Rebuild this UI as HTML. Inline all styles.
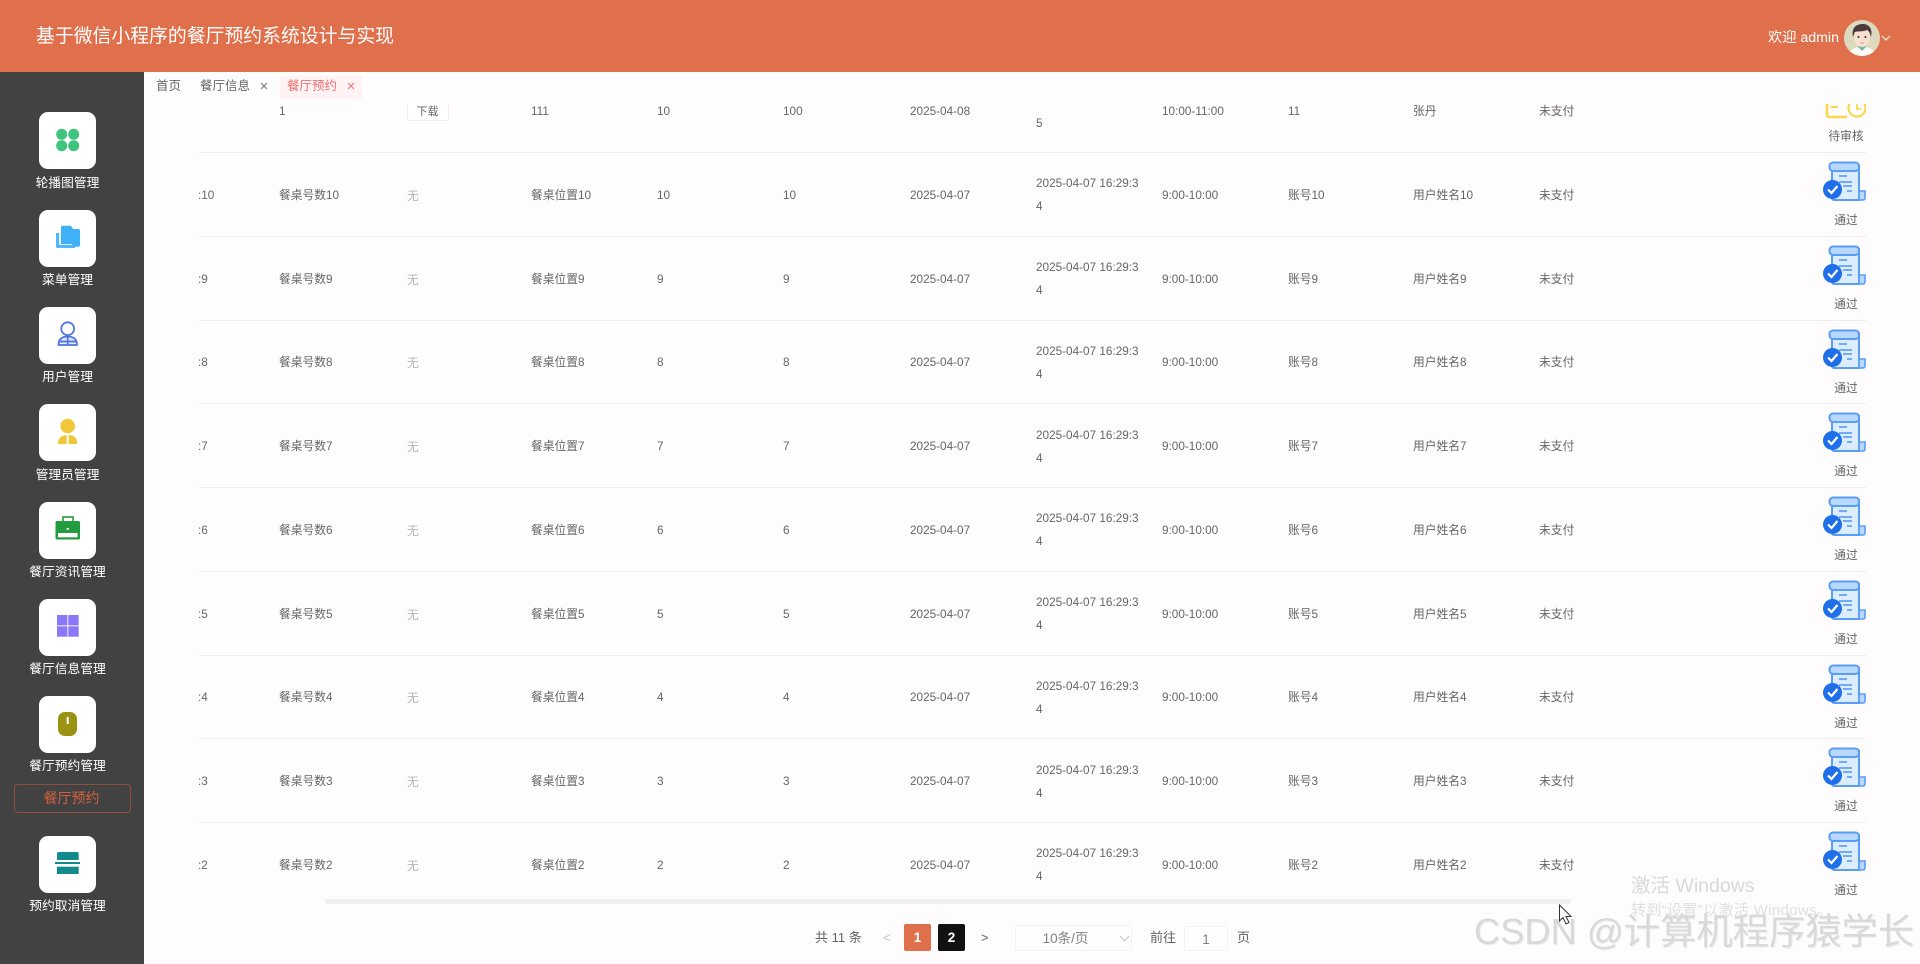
<!DOCTYPE html>
<html lang="zh-CN"><head><meta charset="utf-8"><title>餐厅预约系统</title>
<style>
*{box-sizing:border-box;margin:0;padding:0}
html,body{width:1920px;height:964px;overflow:hidden;background:#fefcfd;font-family:"Liberation Sans","Noto Sans CJK SC",sans-serif}
.a{position:absolute}
#hd{left:0;top:0;width:1920px;height:72px;background:#e0704b;z-index:5}
#title{left:36px;top:22px;font-size:18.85px;line-height:28px;color:#fff;white-space:nowrap}
#welcome{left:1768px;top:28px;font-size:14.2px;line-height:20px;color:#fff;white-space:nowrap}
#sb{left:0;top:72px;width:144px;height:892px;background:#424242;z-index:5}
.card{position:absolute;left:39px;width:57px;height:57px;background:#fff;border-radius:9px;z-index:6}
.lab{position:absolute;left:0;width:135px;text-align:center;color:#fff;font-size:12.75px;line-height:18px;white-space:nowrap;z-index:6}
.ic{position:absolute;left:0;top:0;z-index:7}
#sub{left:14px;top:784px;width:117px;height:29px;border:1px solid #8a4f3e;border-radius:4px;color:#d5603f;font-size:14px;line-height:27px;text-align:center;padding-right:2px;z-index:6}
#tabs{left:144px;top:72px;width:1776px;height:32px;background:#fefdfe;z-index:4}
.tab{position:absolute;top:5px;font-size:12.5px;line-height:18px;color:#666;white-space:nowrap}
#active{left:136px;top:4px;width:82px;height:23px;background:#fff3f3}
.r{position:absolute;left:199px;width:1667px;height:83.75px;border-bottom:1px solid #eeeef0;display:flex;color:#666;font-size:11.75px;overflow:hidden;z-index:1}
.r>span{display:flex;align-items:center;width:126px;line-height:23px;white-space:nowrap;flex:none;padding-top:2px}
.r>span:first-child{width:81px;margin-left:-1px}
.r>span:nth-child(7),.r>span:nth-child(8),.r>span:nth-child(9),.r>span:nth-child(10){padding-left:1px}
.r .no{color:#b5b5b5;padding-top:4px;padding-left:2px}
.r>span.topd{padding-top:4px}
.dl{position:absolute;left:207.5px;top:34px;width:42px;height:18px;border:1px solid #eeeeee;border-radius:2px;font-size:11px;line-height:16px;text-align:center;background:#fff;color:#666}
.st{position:absolute;left:1624px;top:8px;width:44px;height:40px}
.tx{position:absolute;left:1597px;width:100px;top:59px;text-align:center;line-height:18px;font-size:11.75px;color:#666}
#bar{left:325px;top:899px;width:1246px;height:5px;background:#f0eff1;z-index:3}
#pg{left:144px;top:904px;width:1776px;height:60px;background:#fefcfd;z-index:2}
.p{position:absolute;font-size:13px;line-height:18px;color:#606266;white-space:nowrap;z-index:3}
.b{position:absolute;top:924px;width:27px;height:27px;border-radius:2px;color:#fff;text-align:center;font-size:13.5px;font-weight:bold;line-height:27px;z-index:3}
.box{position:absolute;border:1px solid #f3f1f3;border-radius:3px;background:#fffdfe;color:#808080;text-align:center;z-index:3}
.wm{position:absolute;white-space:nowrap;z-index:8}
</style></head><body>
<svg width="0" height="0" style="position:absolute"><defs>
<symbol id="ok" viewBox="0 0 44 40">
<path d="M9 10V37a2 2 0 0 0 2 2H36V3" fill="#dcedff" stroke="#5a9df7" stroke-width="2"/>
<rect x="6.5" y="1.5" width="29.5" height="8.5" rx="3.5" fill="#b9d8ff" stroke="#5a9df7" stroke-width="2"/>
<path d="M16 15H24M16 21H29M20 25H29M24 30H29" stroke="#4f93f2" stroke-width="1.6" fill="none"/>
<path d="M36 30H42V37a2 2 0 0 1-2 2H36Z" fill="#b9d8ff" stroke="#5a9df7" stroke-width="1.6"/>
<circle cx="9.5" cy="28.5" r="9.5" fill="#1f6fe8"/>
<path d="M5 28.5L8.5 32L14.5 25" stroke="#fff" stroke-width="2.2" fill="none"/>
</symbol></defs></svg>

<div class="a" id="hd">
<div class="a" id="title">基于微信小程序的餐厅预约系统设计与实现</div>
<div class="a" id="welcome">欢迎 admin</div>
<svg class="a" style="left:1844px;top:20px" width="36" height="36" viewBox="0 0 36 36">
<clipPath id="cc"><circle cx="18" cy="18" r="18"/></clipPath>
<g clip-path="url(#cc)"><rect width="36" height="36" fill="#dcd9bf"/>
<path d="M5 36C6 28 12 27 18 27S30 28 31 36Z" fill="#fbfbf7"/>
<path d="M14 27L18 31L22 27L22 24H14Z" fill="#7fb5a5"/>
<ellipse cx="18" cy="17" rx="8" ry="10" fill="#f8dfd0"/>
<path d="M9 17C7 7 13 4 19 4C25 4 29 9 27 17C26 13 25 11 23 10C19 12 13 11 11 12C10 13 10 15 9 17Z" fill="#4b3a3e"/>
<circle cx="14.5" cy="17" r="1" fill="#3a2a2a"/><circle cx="21.5" cy="17" r="1" fill="#3a2a2a"/>
<path d="M16 23H20" stroke="#e29a90" stroke-width="1"/></g></svg>
<svg class="a" style="left:1881px;top:35px" width="10" height="7" viewBox="0 0 10 7"><path d="M1 1L5 5L9 1" stroke="#fff" stroke-width="1" fill="none"/></svg>
</div>

<div class="a" id="sb"></div>
<div class="card" style="top:112px"></div><div class="lab" style="top:174px">轮播图管理</div>
<div class="card" style="top:210px"></div><div class="lab" style="top:271px">菜单管理</div>
<div class="card" style="top:307px"></div><div class="lab" style="top:368px">用户管理</div>
<div class="card" style="top:404px"></div><div class="lab" style="top:466px">管理员管理</div>
<div class="card" style="top:502px"></div><div class="lab" style="top:563px">餐厅资讯管理</div>
<div class="card" style="top:599px"></div><div class="lab" style="top:660px">餐厅信息管理</div>
<div class="card" style="top:696px"></div><div class="lab" style="top:757px">餐厅预约管理</div>
<div class="a" id="sub">餐厅预约</div>
<div class="card" style="top:836px"></div><div class="lab" style="top:897px">预约取消管理</div>

<svg class="ic" width="144" height="964" viewBox="0 0 144 964">
<g fill="#3fc47e"><circle cx="61.7" cy="134.3" r="5.5"/><circle cx="73.7" cy="134.3" r="5.5"/><circle cx="61.7" cy="145.7" r="5.5"/><circle cx="73.7" cy="145.7" r="5.5"/></g>
<path d="M61 227.5a1.8 1.8 0 0 1 1.8-1.8H71L73 229H78.200a1.800 1.800 0 0 1 1.800 1.800V245a1.800 1.800 0 0 1-1.800 1.800H61Z" fill="#3fb1f7"/>
<path d="M56 233H59.300V244.800H75V248H57.500a1.500 1.500 0 0 1-1.500-1.500Z" fill="#4fb7f8"/>
<path d="M59.300 233H61V244H72V244.800H59.300Z" fill="#fff"/>
<circle cx="67.7" cy="328.7" r="6.4" fill="none" stroke="#4f76dd" stroke-width="1.8"/>
<path d="M58.5 345C58.5 339 62 336.5 67.7 336.5S77 339 77 345ZM67.7 337V345M59 341.5H76.5" fill="#dfe7fb" stroke="#4f76dd" stroke-width="1.7"/>
<circle cx="67.7" cy="426" r="7.3" fill="#f2c737"/>
<path d="M58 444C58 438 61 435 67.7 435S77.3 438 77.3 444Z" fill="#f2c737"/>
<path d="M66.700 435H68.700V444H66.700Z" fill="#fff"/>
<rect x="63" y="517" width="10" height="6" fill="none" stroke="#239c3f" stroke-width="1.6"/>
<rect x="55.5" y="521" width="24.5" height="18.5" rx="1.5" fill="#239c3f"/>
<rect x="58" y="533" width="19.5" height="4.3" fill="#fff"/><rect x="66.700" y="528" width="2" height="2" fill="#fff"/>
<g fill="#8a78fa"><rect x="57" y="615" width="10.4" height="10.4"/><rect x="68.3" y="615" width="10.4" height="10.4"/><rect x="57" y="626.3" width="10.4" height="10.4"/><rect x="68.3" y="626.3" width="10.4" height="10.4"/></g>
<rect x="58" y="712" width="19" height="24" rx="7" fill="#999212"/><rect x="66.700" y="717" width="2" height="7" fill="#fff"/>
<g fill="#108a8a"><path d="M57 854a2 2 0 0 1 2-2H76.700a2 2 0 0 1 2 2V860H57Z"/><rect x="55" y="862" width="25" height="2"/><rect x="57" y="866.700" width="21.700" height="7.300"/></g>
</svg>

<div class="a" id="tabs">
<div class="tab" style="left:12px">首页</div>
<div class="tab" style="left:56px">餐厅信息</div>
<svg class="a" style="left:116px;top:10px" width="8" height="8" viewBox="0 0 8 8"><path d="M1 1L7 7M7 1L1 7" stroke="#777" stroke-width="1"/></svg>
<div class="a" id="active"></div>
<div class="tab" style="left:143px;color:#ef6f73">餐厅预约</div>
<svg class="a" style="left:203px;top:10px" width="8" height="8" viewBox="0 0 8 8"><path d="M1 1L7 7M7 1L1 7" stroke="#ef6f73" stroke-width="1"/></svg>
</div>

<div class="r" style="top:69px"><span></span><span>1</span><span><i class="dl" style="font-style:normal">下载</i></span><span>111</span><span>10</span><span>100</span><span>2025-04-08</span><span class="topd">2025-04-08 16:03:0<br>5</span><span>10:00-11:00</span><span>11</span><span>张丹</span><span>未支付</span>
<svg class="a" style="left:1625px;top:6px" width="42" height="44" viewBox="0 0 42 44"><path d="M3 10V40a2 2 0 0 0 2 2H23" fill="none" stroke="#fbd84b" stroke-width="2.600"/><path d="M7 32H14" stroke="#fbd84b" stroke-width="2"/><circle cx="33" cy="33" r="8.500" fill="#fff" stroke="#fbd84b" stroke-width="2.200"/><path d="M33 28V34H37" fill="none" stroke="#fbd84b" stroke-width="1.800"/></svg>
<div class="tx">待审核</div></div>
<div class="r" style="top:153px"><span>:10</span><span>餐桌号数10</span><span class="no">无</span><span>餐桌位置10</span><span>10</span><span>10</span><span>2025-04-07</span><span>2025-04-07 16:29:3<br>4</span><span>9:00-10:00</span><span>账号10</span><span>用户姓名10</span><span>未支付</span><svg class="st"><use href="#ok"/></svg><div class="tx">通过</div></div>
<div class="r" style="top:236.75px"><span>:9</span><span>餐桌号数9</span><span class="no">无</span><span>餐桌位置9</span><span>9</span><span>9</span><span>2025-04-07</span><span>2025-04-07 16:29:3<br>4</span><span>9:00-10:00</span><span>账号9</span><span>用户姓名9</span><span>未支付</span><svg class="st"><use href="#ok"/></svg><div class="tx">通过</div></div>
<div class="r" style="top:320.5px"><span>:8</span><span>餐桌号数8</span><span class="no">无</span><span>餐桌位置8</span><span>8</span><span>8</span><span>2025-04-07</span><span>2025-04-07 16:29:3<br>4</span><span>9:00-10:00</span><span>账号8</span><span>用户姓名8</span><span>未支付</span><svg class="st"><use href="#ok"/></svg><div class="tx">通过</div></div>
<div class="r" style="top:404.25px"><span>:7</span><span>餐桌号数7</span><span class="no">无</span><span>餐桌位置7</span><span>7</span><span>7</span><span>2025-04-07</span><span>2025-04-07 16:29:3<br>4</span><span>9:00-10:00</span><span>账号7</span><span>用户姓名7</span><span>未支付</span><svg class="st"><use href="#ok"/></svg><div class="tx">通过</div></div>
<div class="r" style="top:488px"><span>:6</span><span>餐桌号数6</span><span class="no">无</span><span>餐桌位置6</span><span>6</span><span>6</span><span>2025-04-07</span><span>2025-04-07 16:29:3<br>4</span><span>9:00-10:00</span><span>账号6</span><span>用户姓名6</span><span>未支付</span><svg class="st"><use href="#ok"/></svg><div class="tx">通过</div></div>
<div class="r" style="top:571.75px"><span>:5</span><span>餐桌号数5</span><span class="no">无</span><span>餐桌位置5</span><span>5</span><span>5</span><span>2025-04-07</span><span>2025-04-07 16:29:3<br>4</span><span>9:00-10:00</span><span>账号5</span><span>用户姓名5</span><span>未支付</span><svg class="st"><use href="#ok"/></svg><div class="tx">通过</div></div>
<div class="r" style="top:655.5px"><span>:4</span><span>餐桌号数4</span><span class="no">无</span><span>餐桌位置4</span><span>4</span><span>4</span><span>2025-04-07</span><span>2025-04-07 16:29:3<br>4</span><span>9:00-10:00</span><span>账号4</span><span>用户姓名4</span><span>未支付</span><svg class="st"><use href="#ok"/></svg><div class="tx">通过</div></div>
<div class="r" style="top:739.25px"><span>:3</span><span>餐桌号数3</span><span class="no">无</span><span>餐桌位置3</span><span>3</span><span>3</span><span>2025-04-07</span><span>2025-04-07 16:29:3<br>4</span><span>9:00-10:00</span><span>账号3</span><span>用户姓名3</span><span>未支付</span><svg class="st"><use href="#ok"/></svg><div class="tx">通过</div></div>
<div class="r" style="top:823px"><span>:2</span><span>餐桌号数2</span><span class="no">无</span><span>餐桌位置2</span><span>2</span><span>2</span><span>2025-04-07</span><span>2025-04-07 16:29:3<br>4</span><span>9:00-10:00</span><span>账号2</span><span>用户姓名2</span><span>未支付</span><svg class="st"><use href="#ok"/></svg><div class="tx">通过</div></div>

<div class="a" id="bar"></div>
<div class="a" id="pg"></div>
<div class="p" style="left:815px;top:929px">共 11 条</div>
<div class="p" style="left:883px;top:929px;color:#c0c4cc">&lt;</div>
<div class="b" style="left:904px;background:#e0704b">1</div>
<div class="b" style="left:938px;background:#111">2</div>
<div class="p" style="left:981px;top:929px">&gt;</div>
<div class="box" style="left:1015px;top:925px;width:117px;height:26px;font-size:13.5px;line-height:25px;padding-right:16px">10条/页</div>
<svg class="a" style="left:1119px;top:935px;z-index:4" width="11" height="7" viewBox="0 0 11 7"><path d="M1 1L5.500 6L10 1" stroke="#c0c4cc" stroke-width="1" fill="none"/></svg>
<div class="p" style="left:1150px;top:929px">前往</div>
<div class="box" style="left:1184px;top:926px;width:44px;height:25px;font-size:13.5px;line-height:26px">1</div>
<div class="p" style="left:1237px;top:929px">页</div>

<div class="wm" style="left:1631px;top:873px;font-size:19.500px;line-height:26px;color:#d9d9db">激活 Windows</div>
<div class="wm" style="left:1631px;top:901px;font-size:15px;line-height:20px;color:#dfdfe1;letter-spacing:.35px">转到“设置”以激活 Windows。</div>
<div class="wm" style="left:1474px;top:908px;font-size:36.300px;line-height:48px;color:#d9d9d9;text-shadow:1px 1px 1px #ececec">CSDN @计算机程序猿学长</div>
<svg class="a" style="left:1558px;top:904px;z-index:9" width="15" height="21" viewBox="0 0 15 21"><path d="M1.500 1V17L5 13.500L8 20L11 18.500L8 12.500H13Z" fill="#fff" stroke="#333" stroke-width="1"/></svg>
</body></html>
